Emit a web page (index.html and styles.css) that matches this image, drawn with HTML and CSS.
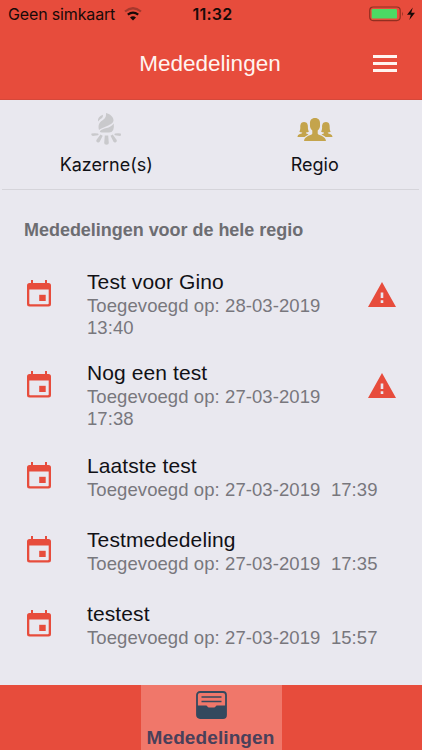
FILE: index.html
```html
<!DOCTYPE html>
<html lang="nl">
<head>
  <meta charset="UTF-8">
  <meta name="viewport" content="width=device-width, initial-scale=1">
  <title>Mededelingen</title>
  <link rel="stylesheet" href="styles.css">
</head>
<body>

  <svg class="defs" width="0" height="0">
    <symbol id="calendar" viewBox="0 0 24 27">
      <path fill-rule="evenodd" d="M4 0h2v3h12V0h2v3h1.500Q24 3 24 5.500v18.500Q24 26.500 21.500 26.500h-19Q0 26.500 0 24V5.500Q0 3 2.500 3H4zM2.300 9.500v14q0 .8.800.800h17.800q.8 0 .8-.8V9.500z"/>
      <path d="M12.200 14.800h6.500v6.200h-6.500z"/>
    </symbol>
    <symbol id="warning" viewBox="0 0 28 25">
      <path fill-rule="evenodd" d="M14 0l14 25H0zM12.700 10.500v5.500h2.600v-5.500zM12.700 18.300v2.700h2.600v-2.700z"/>
    </symbol>
  </svg>

  <div class="statusbar">
    <div class="carrier">
      <span>Geen simkaart</span>
      <svg class="wifi" width="18" height="14" viewBox="0 0 18 14">
        <path d="M1 4.500Q9-2 17 4.500" fill="none" stroke="#a5382d" stroke-width="2.200"/>
        <path d="M3.800 7.700Q9 3.400 14.200 7.700" fill="none" stroke="#180a08" stroke-width="2.200"/>
        <path d="M6 10.500Q9 7.800 12 10.500L9 13.500z" fill="#180a08"/>
      </svg>
    </div>
    <div class="time">11:32</div>
    <div class="battery">
      <svg width="47" height="16" viewBox="0 0 47 16">
        <rect x=".7" y="1" width="30.500" height="13.600" rx="3.500" fill="none" stroke="#922f20" stroke-width="1.200"/>
        <rect x="2.700" y="3" width="25.300" height="9.600" rx="1.200" fill="#4cd964"/>
        <path d="M33 5.500q1.800 2.400 0 4.800z" fill="#922f20"/>
        <path d="M43.800 1.500L38 8.700h3.800L40.300 14l5.700-7.200h-3.800z" fill="#180a08"/>
      </svg>
    </div>
  </div>

  <div class="header">
    <h1>Mededelingen</h1>
    <div class="menu"><span></span><span></span><span></span></div>
  </div>

  <div class="tabs">
    <div class="tab">
      <svg width="32" height="34" viewBox="0 0 32 34" fill="#c9c9cc">
        <path d="M9 18C7.500 12 10 10 13.500 7.500Q16.500 5 16 1C20 2 23.500 4.500 23.500 8.500 23 12 19 13 16 14.500 12.500 16.200 11 16.500 9 18z"/>
        <path d="M23.700 11.500Q25 20.500 19 20.500h-7Q10 20.500 9.800 19.300C13 15.500 20 17 23.700 11.500z"/>
        <path d="M8 9.500Q7.300 5 12.800 2.800 13.500 5.500 10.500 7z"/>
        <path d="M14.800 23.500h3.400l.6 7.500q0 1.800-2.300 1.800T14.200 31zM10.500 22.500l2.200 1.300-3 6q-1 1.400-2.500.4t-.8-2.200zM20.500 23.800l2.200-1.300 4 5.500q.7 1.500-.8 2.300t-2.400-.5zM1.500 21.500q3-.5 6.500 0 1.500.8 0 1.700L2.800 24q-2.300-.8-1.300-2.500zM25 21.500q3.500-.5 5.700 0 1 1.700-.5 2.400l-5.200-.7q-1.500-.9 0-1.700z"/>
      </svg>
      <span>Kazerne(s)</span>
    </div>
    <div class="tab">
      <svg width="36" height="24" viewBox="0 0 36 24" fill="#c4a44c">
        <path d="M18 0c3.500 0 5.300 2.300 5 6q.5 4-2.300 6.500v3c0 2 7.800 1.800 8.300 7.500H7c.5-5.700 8.300-5.500 8.300-7.500v-3Q12.500 10 13 6c-.3-3.700 1.500-6 5-6z"/>
        <path d="M7 4c3.500 0 4 3 3.900 5.500 0 2 .6 3.500 1 4.300q-1.700.8-3 .7c0 1.300 1.300 1.400 2.600 2Q8.500 18 7.500 19H.5c0-3.500 4.800-2.700 4.800-4.500q-1.500.1-3-.7c.8-1.300 1-2.500 1-4.300C3.200 7 3.700 4 7 4zM29 4c-3.500 0-4 3-3.900 5.500 0 2-.6 3.500-1 4.300q1.700.8 3 .7c0 1.300-1.300 1.400-2.600 2 3 1.500 4 2.500 4 2.500h7c0-3.500-4.800-2.700-4.800-4.500q1.500.1 3-.7c-.8-1.300-1-2.500-1-4.300C32.800 7 32.300 4 29 4z"/>
      </svg>
      <span>Regio</span>
    </div>
  </div>

  <div class="content">
    <h2>Mededelingen voor de hele regio</h2>

    <div class="item tall">
      <svg class="calendar"><use href="#calendar"/></svg>
      <div class="text">
        <h3>Test voor Gino</h3>
        <p>Toegevoegd op: 28-03-2019 13:40</p>
      </div>
      <svg class="warning"><use href="#warning"/></svg>
    </div>
    <div class="item tall">
      <svg class="calendar"><use href="#calendar"/></svg>
      <div class="text">
        <h3>Nog een test</h3>
        <p>Toegevoegd op: 27-03-2019 17:38</p>
      </div>
      <svg class="warning"><use href="#warning"/></svg>
    </div>
    <div class="item">
      <svg class="calendar"><use href="#calendar"/></svg>
      <div class="text">
        <h3>Laatste test</h3>
        <p>Toegevoegd op: 27-03-2019&nbsp; 17:39</p>
      </div>
    </div>
    <div class="item">
      <svg class="calendar"><use href="#calendar"/></svg>
      <div class="text">
        <h3>Testmededeling</h3>
        <p>Toegevoegd op: 27-03-2019&nbsp; 17:35</p>
      </div>
    </div>
    <div class="item">
      <svg class="calendar"><use href="#calendar"/></svg>
      <div class="text">
        <h3>testest</h3>
        <p>Toegevoegd op: 27-03-2019&nbsp; 15:57</p>
      </div>
    </div>
  </div>

  <div class="footer">
    <div class="footer-tab">
      <svg width="31" height="28" viewBox="0 0 31 28">
        <rect x="1" y="1" width="29" height="26" rx="3" fill="none" stroke="#34495e" stroke-width="1.800"/>
        <path d="M5.500 6h20M5.500 10.500h20" stroke="#34495e" stroke-width="1.700"/>
        <path d="M1 14.500h9q1 0 1.400 1t1.600 1h5q1.200 0 1.600-1t1.400-1h9V24q0 3-3 3H4q-3 0-3-3z" fill="#34495e"/>
      </svg>
      <span>Mededelingen</span>
    </div>
  </div>

</body>
</html>
```

FILE: styles.css
```css
* {
  box-sizing: border-box;
}

body {
  margin: 0;
  height: 750px;
  display: flex;
  flex-direction: column;
  overflow: hidden;
  font-family: "Liberation Sans", Arial, sans-serif;
  background: #e9e8ef;
  color: #111116;
}

h1, h2, h3, p {
  margin: 0;
  font-weight: normal;
}

.defs {
  display: none;
}

.statusbar {
  display: grid;
  grid-template-columns: 1fr auto 1fr;
  align-items: center;
  height: 28px;
  padding: 0 6px 0 8px;
  background: #e74c3c;
  color: #180a08;
  font-family: Inter, sans-serif;
  font-size: 16px;
}

.carrier {
  display: flex;
  align-items: center;
  gap: 9px;
  white-space: nowrap;
  letter-spacing: -0.15px;
}

.time {
  font-weight: 600;
  letter-spacing: 0.2px;
  padding-left: 1px;
}

.battery {
  display: flex;
  justify-content: flex-end;
}

.header {
  display: grid;
  grid-template-columns: 1fr auto 1fr;
  align-items: center;
  height: 72px;
  padding: 0 25px 0 23px;
  background: #e74c3c;
  border-bottom: 1px solid #d5483a;
  color: #fff4f0;
}

.header h1 {
  grid-column: 2;
  font-size: 22.500px;
}

.menu {
  justify-self: end;
  width: 24px;
  display: grid;
  gap: 4px;
}

.menu span {
  height: 3px;
  background: #fff4f0;
}

.tabs {
  display: flex;
  height: 90px;
  margin: 0 3px 0 2px;
  border-bottom: 1px solid #d5d4da;
}

.tab {
  flex: 1;
  display: flex;
  flex-direction: column;
  align-items: center;
  justify-content: space-between;
  padding: 12px 0 13px;
  font-family: Inter, sans-serif;
  font-size: 18px;
  line-height: 22px;
}

.tab:last-child {
  padding-top: 18px;
}

.content {
  flex: 1;
  padding: 27px 24px 0;
}

.content h2 {
  height: 48px;
  font-size: 18px;
  line-height: 26px;
  font-weight: bold;
  letter-spacing: -0.03px;
  color: #6d6d72;
}

.item {
  display: flex;
  height: 74px;
  padding: 7px 2px 0 3px;
}

.item.tall {
  height: 91px;
  padding-top: 5px;
}

.calendar {
  flex: none;
  width: 24px;
  height: 27px;
  margin: 8px 36px 0 0;
  fill: #e74c3c;
}

.tall .calendar {
  margin-top: 10px;
}

.text {
  flex: 1;
}

.text h3 {
  font-size: 21px;
  line-height: 24px;
  letter-spacing: 0.1px;
}

.text p {
  margin-top: 1px;
  font-size: 18.5px;
  line-height: 22px;
  letter-spacing: 0.08px;
  color: #78777d;
}

.warning {
  flex: none;
  width: 28px;
  height: 25px;
  margin: 12px 0 0 20px;
  fill: #e74c3c;
}

.footer {
  display: flex;
  justify-content: center;
  height: 65px;
  background: #e74c3c;
}

.footer-tab {
  width: 141px;
  display: flex;
  flex-direction: column;
  align-items: center;
  padding-top: 6px;
  background: #f0776a;
}

.footer-tab span {
  margin-top: 7px;
  margin-right: 1px;
  font-size: 19px;
  line-height: 24px;
  font-weight: bold;
  letter-spacing: 0.1px;
  color: #49405a;
}
```
